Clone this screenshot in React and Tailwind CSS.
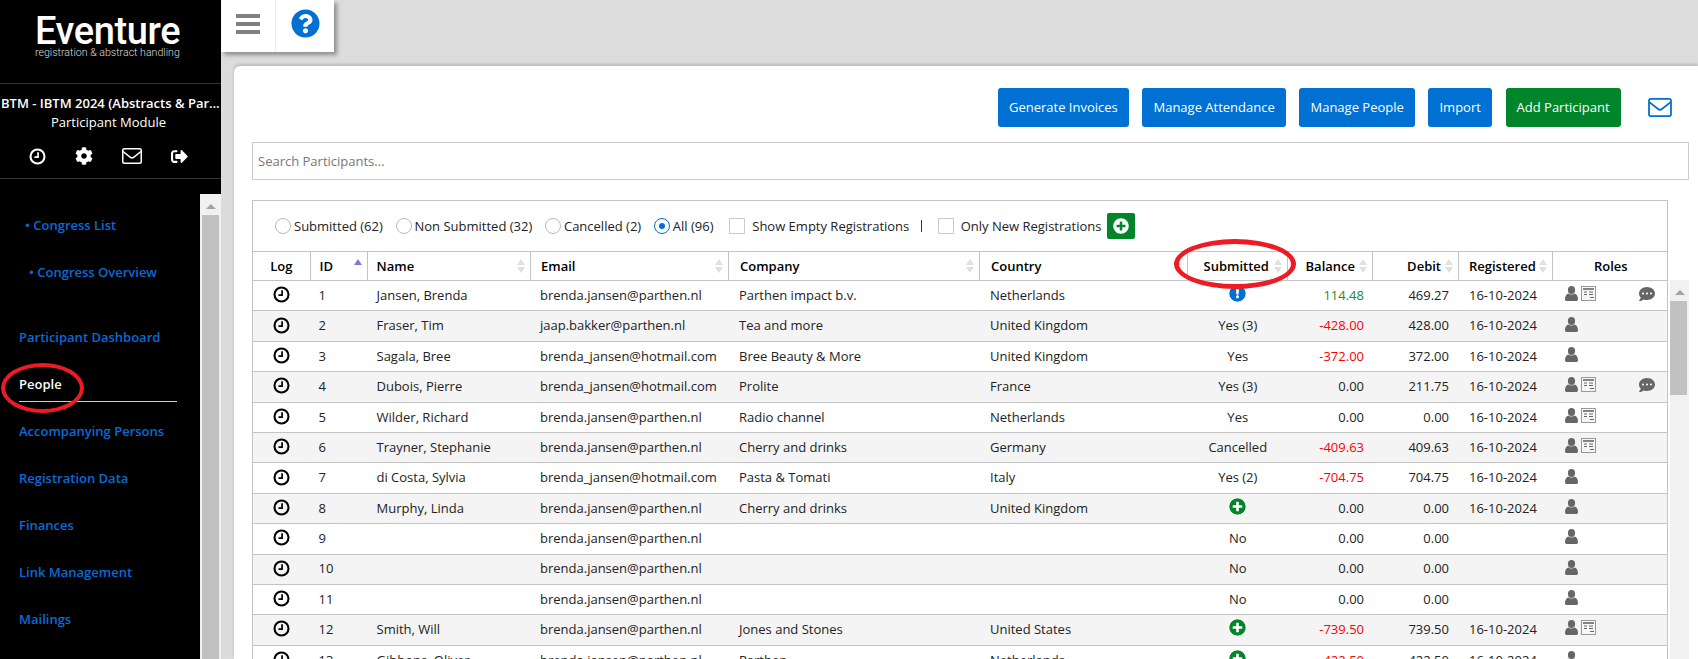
import React from 'react';
import { FaCog, FaSignOutAlt, FaQuestionCircle, FaCommentDots, FaExclamationCircle, FaPlusCircle } from 'react-icons/fa';

const cols = 'grid grid-cols-[57.5px_57px_163.5px_198px_251px_208px_99.5px_85.5px_86px_94px_115.5px]';

const rows = [
  { id: 1, name: 'Jansen, Brenda', email: 'brenda.jansen@parthen.nl', company: 'Parthen impact b.v.', country: 'Netherlands', sub: 'info', bal: '114.48', debit: '469.27', reg: '16-10-2024', form: true, note: true },
  { id: 2, name: 'Fraser, Tim', email: 'jaap.bakker@parthen.nl', company: 'Tea and more', country: 'United Kingdom', sub: 'Yes (3)', bal: '-428.00', debit: '428.00', reg: '16-10-2024' },
  { id: 3, name: 'Sagala, Bree', email: 'brenda_jansen@hotmail.com', company: 'Bree Beauty & More', country: 'United Kingdom', sub: 'Yes', bal: '-372.00', debit: '372.00', reg: '16-10-2024' },
  { id: 4, name: 'Dubois, Pierre', email: 'brenda_jansen@hotmail.com', company: 'Prolite', country: 'France', sub: 'Yes (3)', bal: '0.00', debit: '211.75', reg: '16-10-2024', form: true, note: true },
  { id: 5, name: 'Wilder, Richard', email: 'brenda.jansen@parthen.nl', company: 'Radio channel', country: 'Netherlands', sub: 'Yes', bal: '0.00', debit: '0.00', reg: '16-10-2024', form: true },
  { id: 6, name: 'Trayner, Stephanie', email: 'brenda.jansen@parthen.nl', company: 'Cherry and drinks', country: 'Germany', sub: 'Cancelled', bal: '-409.63', debit: '409.63', reg: '16-10-2024', form: true },
  { id: 7, name: 'di Costa, Sylvia', email: 'brenda_jansen@hotmail.com', company: 'Pasta & Tomati', country: 'Italy', sub: 'Yes (2)', bal: '-704.75', debit: '704.75', reg: '16-10-2024' },
  { id: 8, name: 'Murphy, Linda', email: 'brenda.jansen@parthen.nl', company: 'Cherry and drinks', country: 'United Kingdom', sub: 'add', bal: '0.00', debit: '0.00', reg: '16-10-2024' },
  { id: 9, email: 'brenda.jansen@parthen.nl', sub: 'No', bal: '0.00', debit: '0.00' },
  { id: 10, email: 'brenda.jansen@parthen.nl', sub: 'No', bal: '0.00', debit: '0.00' },
  { id: 11, email: 'brenda.jansen@parthen.nl', sub: 'No', bal: '0.00', debit: '0.00' },
  { id: 12, name: 'Smith, Will', email: 'brenda.jansen@parthen.nl', company: 'Jones and Stones', country: 'United States', sub: 'add', bal: '-739.50', debit: '739.50', reg: '16-10-2024', form: true },
  { id: 13, name: 'Gibbons, Oliver', email: 'brenda.jansen@parthen.nl', company: 'Parthen', country: 'Netherlands', sub: 'add', bal: '-422.50', debit: '422.50', reg: '16-10-2024' },
];

const headers = [
  { label: 'Log', cls: 'justify-center', noSort: true },
  { label: 'ID', cls: 'pl-[9px]', asc: true },
  { label: 'Name', cls: 'pl-[9px]' },
  { label: 'Email', cls: 'pl-[10px]' },
  { label: 'Company', cls: 'pl-[11px]' },
  { label: 'Country', cls: 'pl-[11px]' },
  { label: 'Submitted', cls: 'justify-center pr-[2px]' },
  { label: 'Balance', cls: 'justify-end pr-[17px]' },
  { label: 'Debit', cls: 'justify-end pr-[17px]' },
  { label: 'Registered', cls: 'pl-[10px]' },
  { label: 'Roles', cls: 'justify-center', noSort: true },
];

const Clock = ({ className }) => (
  <svg viewBox="0 0 18 18" className={className} fill="none" stroke="currentColor">
    <circle cx="9" cy="9" r="7.4" strokeWidth="2.2" />
    <path d="M9.6 4.4v5.2H5.8" strokeWidth="1.8" />
  </svg>
);

const EnvelopeO = ({ className }) => (
  <svg viewBox="0 0 20 16" className={className} fill="none" stroke="currentColor" strokeWidth="1.5">
    <rect x="0.75" y="0.75" width="18.5" height="14.5" rx="1.5" />
    <path d="M1 3.5l7.4 5.8c.9.7 2.3.7 3.2 0L19 3.5" />
  </svg>
);

const UserIcon = () => (
  <svg viewBox="0 0 13 15" className="w-[13px] h-[15px] text-[#666] flex-shrink-0" fill="currentColor">
    <ellipse cx="6.5" cy="4" rx="3.6" ry="4" />
    <path d="M0 13.2C0 10 1.2 8 3.4 7.4c.8.7 1.9 1.1 3.1 1.1s2.3-.4 3.1-1.1C11.8 8 13 10 13 13.2c0 1.1-.8 1.8-1.8 1.8H1.8C.8 15 0 14.3 0 13.2z" />
  </svg>
);

const FormIcon = () => (
  <svg viewBox="0 0 15 15" className="w-[15px] h-[15px] text-[#666]" fill="none" stroke="currentColor">
    <rect x="0.5" y="0.5" width="14" height="14" fill="#f7f7f7" stroke="#999" />
    <path d="M2 3h11" strokeWidth="1.6" />
    <path d="M3 6h3M8 6h4M3 8.5h3M8 8.5h4M9 11.5h4" strokeWidth="1" />
  </svg>
);

const Sort = ({ asc }) => (
  <span className="absolute right-[5px] top-[7px] flex flex-col gap-[2px]">
    <span className={`w-0 h-0 border-x-[4px] border-x-transparent border-b-[6px] ${asc ? 'border-b-[#7b7bd8]' : 'border-b-[#e0e0e0]'}`} />
    {!asc && <span className="w-0 h-0 border-x-[4px] border-x-transparent border-t-[6px] border-t-[#e0e0e0]" />}
  </span>
);

const Radio = ({ checked, label }) => (
  <label className="flex items-center gap-[3px]">
    <span className={`w-4 h-4 rounded-full border flex items-center justify-center bg-white ${checked ? 'border-[#0070d2]' : 'border-[#bbb]'}`}>
      {checked && <span className="w-[6px] h-[6px] rounded-full bg-[#0070d2]" />}
    </span>
    <span className="pt-[1px]">{label}</span>
  </label>
);

const Check = ({ label }) => (
  <label className="flex items-center gap-[7px]">
    <span className="w-4 h-4 border border-[#ccc] bg-white" />
    <span className="pt-[1px]">{label}</span>
  </label>
);

const Scrollbar = ({ className, thumb }) => (
  <div className={`bg-[#f1f1f1] flex-shrink-0 ${className}`}>
    <div className="h-[21px] pt-[3px] flex items-center justify-center">
      <span className="w-0 h-0 border-x-[5px] border-x-transparent border-b-[5px] border-b-[#a3a3a3]" />
    </div>
    <div className={`bg-[#c1c1c1] ${thumb}`} />
  </div>
);

const Btn = ({ children, green }) => (
  <button className={`h-[39px] px-[11px] rounded-[3px] text-white text-[13px] ${green ? 'bg-[#00852b]' : 'bg-[#0070d2]'}`}>{children}</button>
);

function SubCell({ value }) {
  if (value === 'info') return <FaExclamationCircle className="w-[17px] h-[17px] text-[#0070d2] bg-white rounded-full -mt-1" />;
  if (value === 'add') return <FaPlusCircle className="w-[17px] h-[17px] text-[#00852b] bg-white rounded-full -mt-1" />;
  return value;
}

const navTop = ['Participant Dashboard', 'People', 'Accompanying Persons', 'Registration Data', 'Finances', 'Link Management', 'Mailings'];

export default function App() {
  return (
    <div className="flex h-screen overflow-hidden bg-[#dcdcdc] font-['Open_Sans',sans-serif] text-[13px] text-[#222]">
      {/* Sidebar */}
      <aside className="w-[221px] bg-black text-white flex flex-col flex-shrink-0 relative">
        <div className="h-[84px] border-b border-[#333] pl-[35px] pt-[16px] font-['Roboto',sans-serif]">
          <div className="text-[38px] leading-[31px] font-medium tracking-[-0.4px]">Eventure</div>
          <div className="text-[10.6px] leading-[11px] font-light text-[#ddd] whitespace-nowrap">registration &amp; abstract handling</div>
        </div>
        <div className="h-[95px] border-b border-[#333] text-center">
          <div className="pt-[10px] px-[1px] text-[13px] leading-[19px] font-semibold truncate text-left">BTM - IBTM 2024 (Abstracts &amp; Participants)</div>
          <div className="text-[13px] leading-[19px] pr-[4px]">Participant Module</div>
          <div className="flex items-center mt-[15px] pl-[29px] gap-[29px]">
            <Clock className="w-[17px] h-[17px]" />
            <FaCog className="w-[18px] h-[18px]" />
            <EnvelopeO className="w-[20px] h-[16px]" />
            <FaSignOutAlt className="w-[17px] h-[17px]" />
          </div>
        </div>
        <div className="flex flex-1 mt-[15px] min-h-0">
          <nav className="w-[200px] pt-[8px] text-[#0a6ad6] font-semibold text-[13px]">
            <a className="block h-[47px] pt-[14px] leading-[19px] pl-[25px]">• Congress List</a>
            <a className="block h-[47px] pt-[14px] leading-[19px] pl-[29px]">• Congress Overview</a>
            <div className="h-[18px]" />
            {navTop.map(item => (
              <a key={item} className="block h-[47px] pt-[14px] leading-[19px] pl-[19px]">
                {item === 'People'
                  ? <span className="block w-[158px] h-[27px] border-b border-[#ccc] text-white">{item}</span>
                  : item}
              </a>
            ))}
          </nav>
          <Scrollbar className="w-[21px]" thumb="h-[460px] w-[17px] ml-[2px]" />
        </div>
        <div className="absolute left-[1px] top-[363px] w-[83px] h-[50px] rounded-[50%] border-[4px] border-[#ed1c24]" />
      </aside>

      {/* Main */}
      <div className="flex-1 flex flex-col min-w-0">
        <div className="flex h-[52px] w-[113px] bg-white shadow-[3px_3px_4px_rgba(0,0,0,0.35)] flex-shrink-0">
          <button className="w-[55px] pb-[4px] border-r border-[#eee] flex flex-col items-center justify-center gap-[4px]">
            <span className="w-[24px] h-[4px] bg-[#808080]" />
            <span className="w-[24px] h-[4px] bg-[#808080]" />
            <span className="w-[24px] h-[4px] bg-[#808080]" />
          </button>
          <div className="flex-1 flex items-center justify-center">
            <FaQuestionCircle className="w-[29px] h-[29px] text-[#0070d2] -mt-[6px]" />
          </div>
        </div>

        <main className="relative flex-1 mt-[14px] ml-[13px] bg-white rounded-tl-md pl-[18px] pt-[22px] shadow-[0_-2px_3px_rgba(0,0,0,0.15)] min-h-0">
          <div className="flex items-center gap-[13.7px] pl-[746px] h-[39px]">
            <Btn>Generate Invoices</Btn>
            <Btn>Manage Attendance</Btn>
            <Btn>Manage People</Btn>
            <Btn>Import</Btn>
            <Btn green>Add Participant</Btn>
            <EnvelopeO className="w-[24px] h-[19px] text-[#0070d2] ml-[14px]" />
          </div>

          <div className="mt-[15px] w-[1437px] h-[38px] border border-[#ccc] flex items-center px-[5px] pt-[2px] text-[#777]">
            Search Participants...
          </div>

          <div className="mt-[20px] w-[1416px] border border-[#c4c4c4] h-[52px] flex items-center pl-[22px] gap-[12.7px]">
            <Radio label="Submitted (62)" />
            <Radio label="Non Submitted (32)" />
            <Radio label="Cancelled (2)" />
            <Radio checked label="All (96)" />
            <div className="ml-[3px]"><Check label="Show Empty Registrations" /></div>
            <span className="w-px h-[12px] bg-[#333] -ml-[1px] mr-[3px]" />
            <div className="flex items-center gap-[5.5px]">
              <Check label="Only New Registrations" />
              <button className="w-[28px] h-[26px] rounded-[2px] bg-[#00852b] flex items-center justify-center">
                <FaPlusCircle className="w-[16px] h-[16px] text-white" />
              </button>
            </div>
          </div>

          <div className={`${cols} w-[1416px] h-[29px] border-x border-b border-[#c4c4c4] font-semibold text-black`}>
            {headers.map((h, i) => (
              <div key={h.label} className={`relative flex items-center pt-[1px] ${h.cls} ${i < headers.length - 1 ? 'border-r border-[#c4c4c4]' : ''}`}>
                {h.label}
                {!h.noSort && <Sort asc={h.asc} />}
              </div>
            ))}
          </div>

          <div className="flex gap-[2px]">
            <div className="w-[1416px] flex-shrink-0">
              {rows.map(r => (
                <div key={r.id} className={`${cols} h-[30.4px] items-center border-x border-b border-[#c4c4c4] ${r.id % 2 === 0 ? 'bg-[#f4f4f4]' : 'bg-white'}`}>
                  <div className="flex justify-center"><Clock className="w-[17px] h-[17px] text-black -mt-[2px]" /></div>
                  <div className="pl-[8px]">{r.id}</div>
                  <div className="pl-[9px]">{r.name}</div>
                  <div className="pl-[9px]">{r.email}</div>
                  <div className="pl-[10px]">{r.company}</div>
                  <div className="pl-[10px]">{r.country}</div>
                  <div className="flex justify-center"><SubCell value={r.sub} /></div>
                  <div className={`text-right pr-[9px] ${r.bal.startsWith('-') ? 'text-[#ff0000]' : r.bal === '0.00' ? '' : 'text-[#2a8a1f]'}`}>{r.bal}</div>
                  <div className="text-right pr-[10px]">{r.debit}</div>
                  <div className="pl-[10px]">{r.reg}</div>
                  <div className="flex items-center pl-[12px] -mt-[4px]">
                    <UserIcon />
                    <span className="w-[15px] ml-[3px]">{r.form && <FormIcon />}</span>
                    {r.note && <FaCommentDots className="w-[18px] h-[16px] text-[#666] ml-[42px]" />}
                  </div>
                </div>
              ))}
            </div>
            <Scrollbar className="w-[19px] h-[400px] -mt-[1px]" thumb="h-[94px] w-[17px]" />
          </div>

          <div className="absolute left-[940px] top-[173px] w-[122px] h-[50px] rounded-[50%] border-[5px] border-[#ed1c24]" />
        </main>
      </div>
    </div>
  );
}
